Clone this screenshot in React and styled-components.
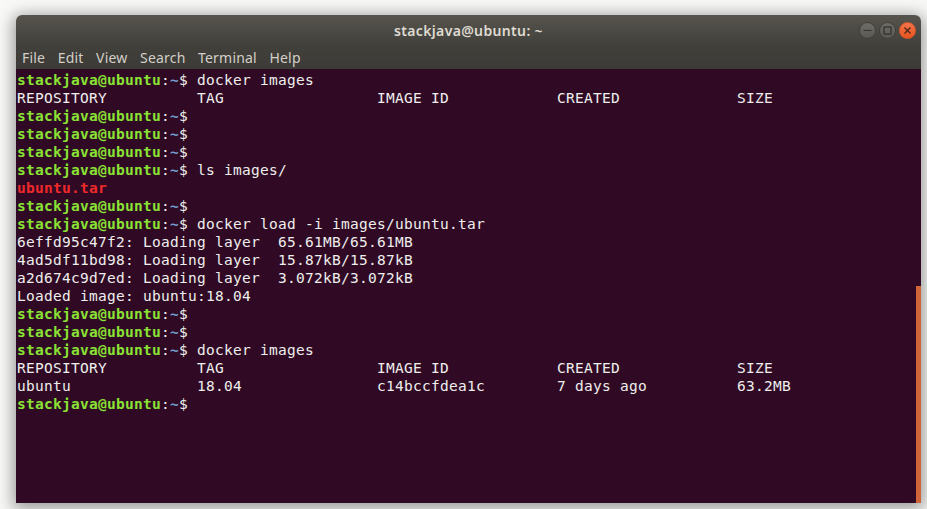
import React from 'react';
import styled, { createGlobalStyle } from 'styled-components';

const GlobalStyle = createGlobalStyle`
  html, body {
    margin: 0;
    height: 100%;
    background: #f8f8f6;
    overflow: hidden;
  }
`;

const Desktop = styled.div`
  width: 927px;
  height: 509px;
  padding: 15px 6px 6px 16px;
  box-sizing: border-box;
`;

const Window = styled.div`
  height: 488px;
  display: flex;
  flex-direction: column;
  border-radius: 6px 6px 0 0;
  box-shadow: 0 3px 16px 3px rgba(0, 0, 0, 0.38);
  overflow: hidden;
`;

const Header = styled.header`
  height: 54px;
  flex: none;
  display: flex;
  flex-direction: column;
  background: linear-gradient(#57544d, #403f3a 60%, #3c3b37);
`;

const TitleBar = styled.div`
  height: 31px;
  display: grid;
  grid-template-columns: 1fr auto 1fr;
  align-items: center;
`;

const Title = styled.div`
  grid-column: 2;
  font: 600 14px "Noto Sans", sans-serif;
  color: #dfdbd2;
  letter-spacing: 0.35px;
`;

const Controls = styled.div`
  grid-column: 3;
  justify-self: end;
  display: flex;
  gap: 3px;
  padding-right: 5px;
`;

const ControlButton = styled.div`
  width: 17px;
  height: 17px;
  box-sizing: border-box;
  border-radius: 50%;
  display: flex;
  align-items: center;
  justify-content: center;
  border: 1px solid ${props => (props.close ? '#d5562b' : '#3f3e39')};
  background: ${props => (props.close ? 'linear-gradient(#f4744a, #e9541f)' : 'linear-gradient(#6f6d67, #5a5852)')};
`;

const MenuBar = styled.nav`
  display: flex;
  gap: 12.5px;
  padding: 2px 0 0 6px;
`;

const MenuItem = styled.span`
  font: 400 14px "Noto Sans", sans-serif;
  color: #d3cfc8;
  letter-spacing: 0.2px;
`;

const Body = styled.main`
  flex: 1;
  min-height: 0;
  display: flex;
  background: #300a24;
`;

const Screen = styled.pre`
  flex: 1;
  margin: 0;
  padding: 2px 0 0 1px;
  font: 14.5px/18px "DejaVu Sans Mono", monospace;
  letter-spacing: 0.27px;
  color: #eeeeec;
`;

const Line = styled.div`
  height: 18px;
  white-space: pre;
`;

const User = styled.b`
  color: #8ae234;
`;

const Path = styled.b`
  color: #729fcf;
`;

const Archive = styled.b`
  color: #ef2929;
`;

const ScrollTrack = styled.div`
  width: 5px;
  flex: none;
  display: flex;
  flex-direction: column;
  justify-content: flex-end;
`;

const ScrollThumb = styled.div`
  height: 217px;
  background: #cf6339;
`;

const Prompt = ({ cmd }) => (
  <Line>
    <User>stackjava@ubuntu</User>:<Path>~</Path>${cmd ? ` ${cmd}` : ''}
  </Line>
);

export default function App() {
  return (
    <Desktop>
      <GlobalStyle />
      <Window>
        <Header>
          <TitleBar>
            <Title>stackjava@ubuntu: ~</Title>
            <Controls>
              <ControlButton>
                <svg width="11" height="11" viewBox="0 0 11 11">
                  <path d="M1.5 5.5h8" stroke="#35342f" strokeWidth="1.2" />
                </svg>
              </ControlButton>
              <ControlButton>
                <svg width="11" height="11" viewBox="0 0 11 11">
                  <rect x="2" y="2" width="7" height="7" fill="none" stroke="#35342f" strokeWidth="1.3" />
                </svg>
              </ControlButton>
              <ControlButton close>
                <svg width="11" height="11" viewBox="0 0 11 11">
                  <path d="M2.5 2.5l6 6M8.5 2.5l-6 6" stroke="#4a2a1c" strokeWidth="1.4" />
                </svg>
              </ControlButton>
            </Controls>
          </TitleBar>
          <MenuBar>
            {['File', 'Edit', 'View', 'Search', 'Terminal', 'Help'].map(item => (
              <MenuItem key={item}>{item}</MenuItem>
            ))}
          </MenuBar>
        </Header>
        <Body>
          <Screen>
            <Prompt cmd="docker images" />
            <Line>REPOSITORY          TAG                 IMAGE ID            CREATED             SIZE</Line>
            <Prompt />
            <Prompt />
            <Prompt />
            <Prompt cmd="ls images/" />
            <Line><Archive>ubuntu.tar</Archive></Line>
            <Prompt />
            <Prompt cmd="docker load -i images/ubuntu.tar" />
            <Line>6effd95c47f2: Loading layer  65.61MB/65.61MB</Line>
            <Line>4ad5df11bd98: Loading layer  15.87kB/15.87kB</Line>
            <Line>a2d674c9d7ed: Loading layer  3.072kB/3.072kB</Line>
            <Line>Loaded image: ubuntu:18.04</Line>
            <Prompt />
            <Prompt />
            <Prompt cmd="docker images" />
            <Line>REPOSITORY          TAG                 IMAGE ID            CREATED             SIZE</Line>
            <Line>ubuntu              18.04               c14bccfdea1c        7 days ago          63.2MB</Line>
            <Prompt />
          </Screen>
          <ScrollTrack>
            <ScrollThumb />
          </ScrollTrack>
        </Body>
      </Window>
    </Desktop>
  );
}
